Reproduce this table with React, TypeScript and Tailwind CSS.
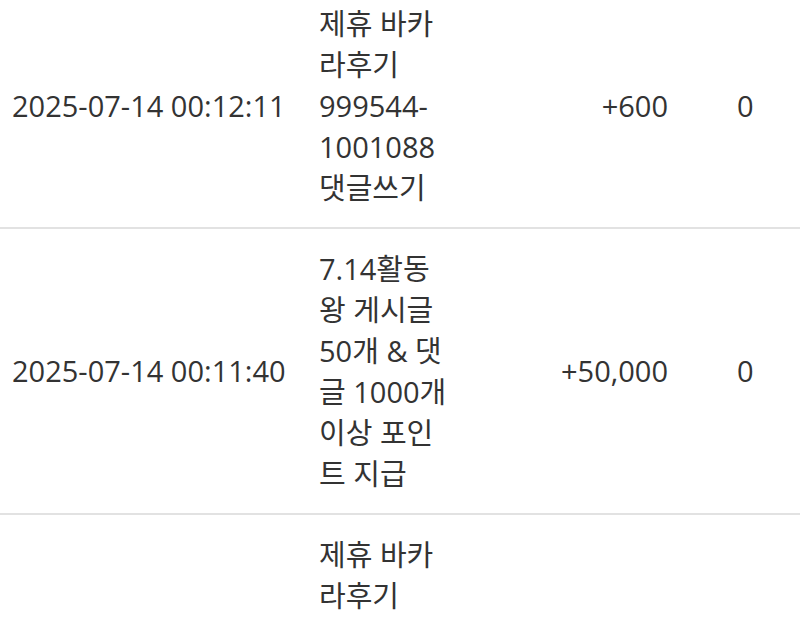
const rows = [
  {
    date: '2025-07-14 00:12:11',
    memo: ['제휴 바카', '라후기', '999544-', '1001088', '댓글쓰기'],
    point: '+600',
    used: '0',
  },
  {
    date: '2025-07-14 00:11:40',
    memo: ['7.14활동', '왕 게시글', '50개 & 댓', '글 1000개', '이상 포인', '트 지급'],
    point: '+50,000',
    used: '0',
  },
  {
    date: '',
    memo: ['제휴 바카', '라후기', '999544-', '1001088', '댓글쓰기'],
    point: '',
    used: '',
  },
]

export default function App() {
  return (
    <div
      className="h-[619px] w-[800px] overflow-hidden bg-white text-[29px] text-[#333333]"
      style={{ fontFamily: '"Open Sans", "Noto Sans CJK KR", sans-serif' }}
    >
      <div className="-mt-[16px]">
        {rows.map((row, i) => (
          <div key={i} className="flex items-center border-b-2 border-[#e2e2e2]">
            {/* date */}
            <div className="w-[319px] shrink-0 pl-[12px] whitespace-nowrap">{row.date}</div>
            {/* memo, wrapped as in the narrow column */}
            <div className="w-[150px] shrink-0 py-[19px] leading-[41px] whitespace-nowrap">
              {row.memo.map((line, j) => (
                <div key={j}>{line}</div>
              ))}
            </div>
            {/* point */}
            <div className="w-[199px] shrink-0 text-right">{row.point}</div>
            {/* used */}
            <div className="pl-[69px]">{row.used}</div>
          </div>
        ))}
      </div>
    </div>
  )
}
